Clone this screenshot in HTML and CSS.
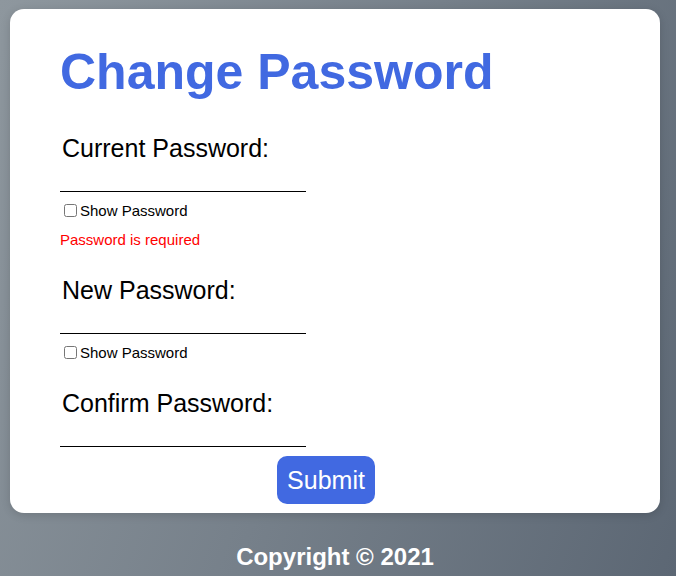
FILE: index.html
```html
<!DOCTYPE html>
<html>
<head>
<meta charset="utf-8">
<link rel="stylesheet" href="styles.css">
</head>
<body>
<main class="card">
  <h1 class="title">Change Password</h1>
  <form class="form">
    <label class="label" for="cur">Current Password:</label>
    <input class="input" id="cur" type="password">
    <div class="show"><input type="checkbox" class="check" id="s1"><label for="s1">Show Password</label></div>
    <div class="error">Password is required</div>
    <label class="label label-second" for="new">New Password:</label>
    <input class="input" id="new" type="password">
    <div class="show"><input type="checkbox" class="check" id="s2"><label for="s2">Show Password</label></div>
    <label class="label label-third" for="conf">Confirm Password:</label>
    <input class="input" id="conf" type="password">
    <div class="actions"><button type="button" class="submit">Submit</button></div>
  </form>
</main>
<footer class="footer">Copyright © 2021</footer>
</body>
</html>
```
FILE: styles.css
```css
html, body {
  margin: 0;
  height: 100%;
}
body {
  padding: 9px 16px 0 10px;
  box-sizing: border-box;
  background: linear-gradient(110deg, #8e979e 0%, #76808a 50%, #5c6774 100%);
  font-family: "Liberation Sans", Arial, sans-serif;
  overflow: hidden;
}
.card {
  background: #fff;
  border-radius: 14px;
  height: 504px;
  box-sizing: border-box;
  padding: 35px 50px 0 50px;
  box-shadow: 0 2px 10px rgba(0,0,0,0.15);
}
.title {
  margin: 0;
  font-size: 50px;
  font-weight: bold;
  color: #4169e1;
  line-height: 57px;
}
.form {
  display: flex;
  flex-direction: column;
  align-items: flex-start;
  margin-top: 33px;
}
.label {
  font-size: 25px;
  line-height: 29px;
  margin-left: 2px;
}
.label-second { margin-top: 28px; }
.label-third { margin-top: 28px; }
.input {
  width: 246px;
  height: 29px;
  box-sizing: border-box;
  border: none;
  border-bottom: 1px solid #000;
  padding: 0;
  margin: 0;
  outline: none;
  font-size: 16px;
}
.show {
  display: flex;
  align-items: center;
  font-size: 15px;
  line-height: 17px;
  margin-top: 10px;
}
.check {
  width: 13px;
  height: 13px;
  margin: 0 3px 0 4px;
}
.error {
  color: #ff0000;
  font-size: 15px;
  line-height: 17px;
  margin-top: 12px;
}
.actions {
  margin-top: 9px;
  margin-left: 217px;
}
.submit {
  background: #4169e1;
  color: #fff;
  border: none;
  border-radius: 10px;
  font-family: "Liberation Sans", Arial, sans-serif;
  font-size: 25px;
  width: 98px;
  height: 48px;
  padding: 0;
}
.footer {
  text-align: center;
  color: #fff;
  font-weight: bold;
  font-size: 24px;
  margin-top: 30px;
}
```
